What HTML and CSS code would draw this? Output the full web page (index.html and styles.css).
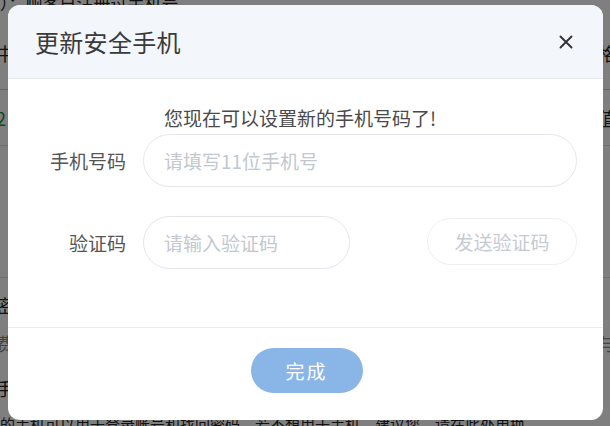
FILE: index.html
```html
<!DOCTYPE html>
<html lang="zh">
<head>
<meta charset="utf-8">
<link rel="stylesheet" href="styles.css">
</head>
<body>
<div class="page">
  <div class="prow top"><span>）：顾客已注册过手机号</span></div>
  <div class="prow r1"><span>中</span><span class="right">格</span></div>
  <div class="prow r2"><span class="green">2</span><span class="right">值</span></div>
  <div class="prow r3"><span></span></div>
  <div class="prow r4"><span>密</span></div>
  <div class="prow r5"><span class="light">费</span><span class="right light">与</span></div>
  <div class="prow r6"><span>手</span></div>
  <div class="prow r7"><span>的手机可以用于登录账号和找回密码，若不想用于手机，建议您，请在此处更换</span></div>
</div>
<div class="mask"></div>
<div class="dialog">
  <div class="dhead">
    <span class="dtitle">更新安全手机</span>
    <svg class="close" width="14" height="14" viewBox="0 0 14 14"><path d="M1.5 1.5L12.5 12.5M12.5 1.5L1.5 12.5" stroke="#333" stroke-width="1.9" stroke-linecap="round"/></svg>
  </div>
  <div class="dbody">
    <div class="hint">您现在可以设置新的手机号码了!</div>
    <div class="frow">
      <label class="flabel">手机号码</label>
      <div class="finput wide">请填写11位手机号</div>
    </div>
    <div class="frow second">
      <label class="flabel">验证码</label>
      <div class="finput code">请输入验证码</div>
      <div class="spacer"></div>
      <div class="sendbtn">发送验证码</div>
    </div>
  </div>
  <div class="dfoot">
    <div class="okbtn">完成</div>
  </div>
</div>
</body>
</html>
```

FILE: styles.css
```css
html, body {
  margin: 0;
  padding: 0;
  width: 610px;
  height: 426px;
  overflow: hidden;
  font-family: "Noto Sans CJK SC", "Noto Sans", sans-serif;
}
body { background: #fff; position: relative; }

.page {
  display: flex;
  flex-direction: column;
  color: #222;
  font-size: 18px;
}
.prow {
  display: flex;
  justify-content: space-between;
  border-bottom: 1px solid #ddd;
  margin-left: -4px;
}
.prow .right { margin-right: -6px; }
.prow.top { height: 20px; align-items: flex-start; line-height: 14px; margin-top: -4px; padding-left: 4px; border: 0; font-size: 17px; }
.prow.r1 { height: 73px; align-items: center; border-bottom: 1px solid #ccc; }
.prow.r2 { height: 55px; align-items: center; }
.prow.r3 { height: 131px; }
.prow.r4 { height: 40px; align-items: flex-end; border: 0; }
.prow.r5 { height: 50px; align-items: center; border: 0; }
.prow.r6 { height: 40px; align-items: center; border: 0; }
.prow.r7 { height: 30px; align-items: center; border: 0; font-size: 15px; padding-left: 4px; white-space: nowrap; }
.green { color: #1a8a4a; }
.light { color: #888; }

.mask {
  position: absolute;
  inset: 0;
  background: rgba(0, 0, 0, 0.5);
}

.dialog {
  position: absolute;
  left: 8px;
  top: 5px;
  width: 595px;
  height: 415px;
  background: #fff;
  border-radius: 12px;
  overflow: hidden;
  display: flex;
  flex-direction: column;
}
.dhead {
  height: 73px;
  flex: none;
  background: #f3f6fb;
  border-bottom: 1px solid #e6eaf0;
  display: flex;
  align-items: center;
  justify-content: space-between;
  padding: 0 30px 0 27px;
}
.dtitle {
  font-size: 24px;
  color: #3a3a3a;
  letter-spacing: 0.3px;
}
.close { display: block; margin-top: 1px; }

.dbody {
  flex: 1;
  display: flex;
  flex-direction: column;
  padding: 26px 26px 0 18px;
}
.hint {
  font-size: 19px;
  color: #4a4a4a;
  line-height: 26px;
  padding-left: 138px;
  height: 29px;
}
.frow {
  display: flex;
  align-items: center;
}
.frow.second { margin-top: 29px; }
.flabel {
  width: 100px;
  text-align: right;
  font-size: 19px;
  color: #555;
  margin-right: 17px;
  flex: none;
}
.finput {
  box-sizing: border-box;
  height: 53px;
  border: 1px solid #e2e5ec;
  border-radius: 27px;
  display: flex;
  align-items: center;
  padding-left: 20px;
  font-size: 19px;
  color: #c3c7cf;
}
.finput.wide { flex: 1; }
.finput.code { width: 207px; flex: none; }
.spacer { flex: 1; }
.sendbtn {
  box-sizing: border-box;
  width: 150px;
  height: 47px;
  border: 1px solid #eceff4;
  border-radius: 24px;
  display: flex;
  align-items: center;
  justify-content: center;
  font-size: 19px;
  color: #c6cad2;
  margin-top: -3px;
}

.dfoot {
  flex: none;
  height: 93px;
  box-sizing: border-box;
  border-top: 1px solid #e8edf4;
  display: flex;
  justify-content: center;
  padding-top: 20px;
}
.okbtn {
  width: 112px;
  height: 45px;
  border-radius: 23px;
  background: #89b6e6;
  color: #fff;
  font-size: 19px;
  letter-spacing: 2px;
  display: flex;
  align-items: center;
  justify-content: center;
  margin-left: 2px;
}
```
